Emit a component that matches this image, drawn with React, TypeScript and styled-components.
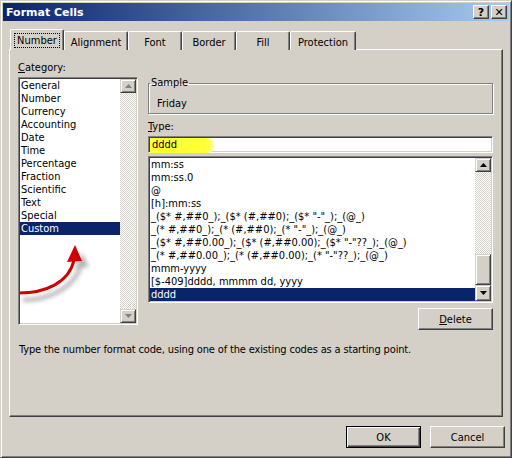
import styled, { createGlobalStyle } from "styled-components";

const GlobalStyle = createGlobalStyle`
  body {
    margin: 0;
    background: #d4d0c8;
    font-family: "DejaVu Sans Condensed", "Liberation Sans", sans-serif;
    font-size: 11px;
    color: #000;
  }
  * { box-sizing: border-box; }
`;

const Window = styled.div`
  width: 512px;
  height: 458px;
  background: #d4d0c8;
  display: flex;
  flex-direction: column;
  border: 1px solid;
  border-color: #d4d0c8 #404040 #404040 #d4d0c8;
  box-shadow: inset 1px 1px 0 #fff, inset -1px -1px 0 #808080;
  padding: 2px;
`;

const TitleBar = styled.div`
  height: 18px;
  display: flex;
  align-items: center;
  padding: 0 2px 0 3px;
  background: linear-gradient(to right, #0a246a, #a6caf0);
  color: #fff;
  font-family: "DejaVu Sans", "Liberation Sans", sans-serif;
  font-weight: bold;
  font-size: 11px;
`;

const Title = styled.span`
  flex: 1;
`;

const CaptionButton = styled.div`
  width: 16px;
  height: 14px;
  margin-left: 2px;
  background: #d4d0c8;
  border: 1px solid;
  border-color: #fff #404040 #404040 #fff;
  box-shadow: inset -1px -1px 0 #808080;
  color: #000;
  display: flex;
  align-items: center;
  justify-content: center;
  font-family: "DejaVu Sans", sans-serif;
  font-weight: bold;
  font-size: 11px;
  line-height: 1;
`;

const TabRow = styled.div`
  display: flex;
  align-items: flex-end;
  height: 21px;
  margin: 8px 0 -1px 7px;
  position: relative;
  z-index: 1;
`;

const Tab = styled.div<{ $w: number; $active?: boolean }>`
  width: ${(p) => p.$w}px;
  height: ${(p) => (p.$active ? 21 : 19)}px;
  background: #d4d0c8;
  border-top: 1px solid #fff;
  border-left: 1px solid #fff;
  border-right: 1px solid #404040;
  border-top-left-radius: 2px;
  border-top-right-radius: 2px;
  box-shadow: inset -1px 0 0 #808080;
  display: flex;
  align-items: center;
  justify-content: center;
  padding-top: ${(p) => (p.$active ? 0 : 2)}px;
`;

const FocusText = styled.span`
  outline: 1px dotted #000;
  padding: 0 2px;
  line-height: 13px;
`;

const Panel = styled.div`
  width: 494px;
  height: 368px;
  margin-left: 6px;
  border: 1px solid;
  border-color: #fff #404040 #404040 #fff;
  box-shadow: inset -1px -1px 0 #808080;
  padding: 12px 8px 0 8px;
  display: flex;
  flex-direction: column;
`;

const Columns = styled.div`
  display: flex;
  gap: 10px;
`;

const LeftCol = styled.div`
  width: 120px;
  display: flex;
  flex-direction: column;
`;

const RightCol = styled.div`
  width: 345px;
  display: flex;
  flex-direction: column;
  padding-top: 15px;
`;

const Label = styled.div`
  height: 12px;
  line-height: 12px;
  margin-bottom: 3px;
`;

const Sunken = styled.div<{ $h: number }>`
  position: relative;
  height: ${(p) => p.$h}px;
  background: #fff;
  border: 1px solid;
  border-color: #808080 #fff #fff #808080;
  box-shadow: inset 1px 1px 0 #404040, inset -1px -1px 0 #d4d0c8;
  padding: 1px;
  display: flex;
  overflow: hidden;
`;

const Items = styled.div`
  flex: 1;
  overflow: hidden;
  white-space: nowrap;
`;

const Item = styled.div<{ $sel?: boolean }>`
  height: 13px;
  line-height: 13px;
  padding-left: 1px;
  background: ${(p) => (p.$sel ? "#0a246a" : "transparent")};
  color: ${(p) => (p.$sel ? "#fff" : "#000")};
`;

const ScrollBar = styled.div`
  width: 16px;
  display: flex;
  flex-direction: column;
  background: repeating-conic-gradient(#d4d0c8 0 25%, #fff 0 50%) 0 0 / 2px 2px;
`;

const Raised = styled.div<{ $h: number }>`
  height: ${(p) => p.$h}px;
  flex-shrink: 0;
  background: #d4d0c8;
  border: 1px solid;
  border-color: #d4d0c8 #404040 #404040 #d4d0c8;
  box-shadow: inset 1px 1px 0 #fff, inset -1px -1px 0 #808080;
  display: flex;
  align-items: center;
  justify-content: center;
`;

const Track = styled.div`
  flex: 1;
`;

const Arrow = ({ up, disabled }: { up?: boolean; disabled?: boolean }) => (
  <svg width="7" height="4" viewBox="0 0 7 4">
    <path
      d={up ? "M3.5 0 L7 4 L0 4 Z" : "M0 0 L7 0 L3.5 4 Z"}
      fill={disabled ? "#808080" : "#000"}
    />
  </svg>
);

const RedArrow = styled.svg`
  position: absolute;
  left: 0;
  top: 0;
  pointer-events: none;
`;

const GroupBox = styled.fieldset`
  margin: 0 0 7px;
  height: 37px;
  border: 1px solid #808080;
  box-shadow: inset 1px 1px 0 #fff, 1px 1px 0 #fff;
  padding: 8px 8px 0;
  legend {
    padding: 0 1px;
    margin-left: -7px;
    line-height: 12px;
  }
`;

const SampleText = styled.div`
  line-height: 13px;
`;

const TypeInput = styled.div`
  position: relative;
  height: 17px;
  margin-bottom: 3px;
  background: #fff;
  border: 1px solid;
  border-color: #808080 #fff #fff #808080;
  box-shadow: inset 1px 1px 0 #404040, inset -1px -1px 0 #d4d0c8;
  padding: 1px 0 0 2px;
  line-height: 14px;
`;

const Highlight = styled.span`
  display: inline-block;
  width: 64px;
  height: 15px;
  margin-left: -1px;
  padding-left: 2px;
  background: linear-gradient(to right, #ffff33 85%, #ffff8a);
  border-radius: 0 6px 6px 0;
`;

const Underlined = styled.span`
  text-decoration: underline;
`;

const ButtonRight = styled.div`
  display: flex;
  justify-content: flex-end;
  margin-top: 5px;
`;

const PushButton = styled.div<{ $default?: boolean }>`
  width: 75px;
  height: 22px;
  background: #d4d0c8;
  border: 1px solid;
  border-color: ${(p) =>
    p.$default ? "#000" : "#fff #404040 #404040 #fff"};
  box-shadow: ${(p) =>
    p.$default
      ? "inset 1px 1px 0 #fff, inset -1px -1px 0 #404040, inset -2px -2px 0 #808080"
      : "inset -1px -1px 0 #808080"};
  display: flex;
  align-items: center;
  justify-content: center;
`;

const HelpText = styled.div`
  margin-top: 13px;
  padding-left: 1px;
  line-height: 13px;
  letter-spacing: -0.15px;
`;

const Footer = styled.div`
  display: flex;
  justify-content: flex-end;
  gap: 9px;
  margin-top: 9px;
  padding-right: 4px;
`;

const categories = [
  "General",
  "Number",
  "Currency",
  "Accounting",
  "Date",
  "Time",
  "Percentage",
  "Fraction",
  "Scientific",
  "Text",
  "Special",
  "Custom",
];

const types = [
  "mm:ss",
  "mm:ss.0",
  "@",
  "[h]:mm:ss",
  '_($* #,##0_);_($* (#,##0);_($* "-"_);_(@_)',
  '_(* #,##0_);_(* (#,##0);_(* "-"_);_(@_)',
  '_($* #,##0.00_);_($* (#,##0.00);_($* "-"??_);_(@_)',
  '_(* #,##0.00_);_(* (#,##0.00);_(* "-"??_);_(@_)',
  "mmm-yyyy",
  "[$-409]dddd, mmmm dd, yyyy",
  "dddd",
];

const tabs = [
  { name: "Number", w: 54 },
  { name: "Alignment", w: 64 },
  { name: "Font", w: 54 },
  { name: "Border", w: 54 },
  { name: "Fill", w: 54 },
  { name: "Protection", w: 66 },
];

export default function App() {
  return (
    <>
      <GlobalStyle />
      <Window>
        <TitleBar>
          <Title>Format Cells</Title>
          <CaptionButton>?</CaptionButton>
          <CaptionButton>✕</CaptionButton>
        </TitleBar>

        <TabRow>
          {tabs.map((t, i) => (
            <Tab key={t.name} $w={t.w} $active={i === 0}>
              {i === 0 ? <FocusText>{t.name}</FocusText> : t.name}
            </Tab>
          ))}
        </TabRow>

        <Panel>
          <Columns>
            <LeftCol>
              <Label>
                <Underlined>C</Underlined>ategory:
              </Label>
              <Sunken $h={248}>
                <Items>
                  {categories.map((c) => (
                    <Item key={c} $sel={c === "Custom"}>
                      {c}
                    </Item>
                  ))}
                </Items>
                <ScrollBar>
                  <Raised $h={14}>
                    <Arrow up disabled />
                  </Raised>
                  <Track />
                  <Raised $h={14}>
                    <Arrow disabled />
                  </Raised>
                </ScrollBar>
                <RedArrow width="118" height="244" viewBox="0 0 118 244">
                  <defs>
                    <filter id="blur" x="-20%" y="-20%" width="140%" height="140%">
                      <feGaussianBlur stdDeviation="2" />
                    </filter>
                  </defs>
                  <g filter="url(#blur)" opacity="0.55">
                    <path
                      d="M4 222 C 30 222, 56 210, 62 186"
                      stroke="#777"
                      strokeWidth="4"
                      fill="none"
                    />
                    <path d="M63 175 L56 190 L70 189 Z" fill="#777" />
                  </g>
                  <path
                    d="M0 215 C 26 215, 50 205, 55 182"
                    stroke="#d00000"
                    strokeWidth="3"
                    fill="none"
                  />
                  <path d="M56 167 L48 184 L63 183 Z" fill="#d00000" />
                </RedArrow>
              </Sunken>
            </LeftCol>

            <RightCol>
              <GroupBox>
                <legend>Sample</legend>
                <SampleText>Friday</SampleText>
              </GroupBox>
              <Label>
                <Underlined>T</Underlined>ype:
              </Label>
              <TypeInput>
                <Highlight>dddd</Highlight>
              </TypeInput>
              <Sunken $h={147}>
                <Items>
                  {types.map((t) => (
                    <Item key={t} $sel={t === "dddd"}>
                      {t}
                    </Item>
                  ))}
                </Items>
                <ScrollBar>
                  <Raised $h={14}>
                    <Arrow up />
                  </Raised>
                  <Track />
                  <Raised $h={31} />
                  <Raised $h={16}>
                    <Arrow />
                  </Raised>
                </ScrollBar>
              </Sunken>
              <ButtonRight>
                <PushButton>
                  <span>
                    <Underlined>D</Underlined>elete
                  </span>
                </PushButton>
              </ButtonRight>
            </RightCol>
          </Columns>
          <HelpText>
            Type the number format code, using one of the existing codes as a
            starting point.
          </HelpText>
        </Panel>

        <Footer>
          <PushButton $default>OK</PushButton>
          <PushButton>Cancel</PushButton>
        </Footer>
      </Window>
    </>
  );
}
